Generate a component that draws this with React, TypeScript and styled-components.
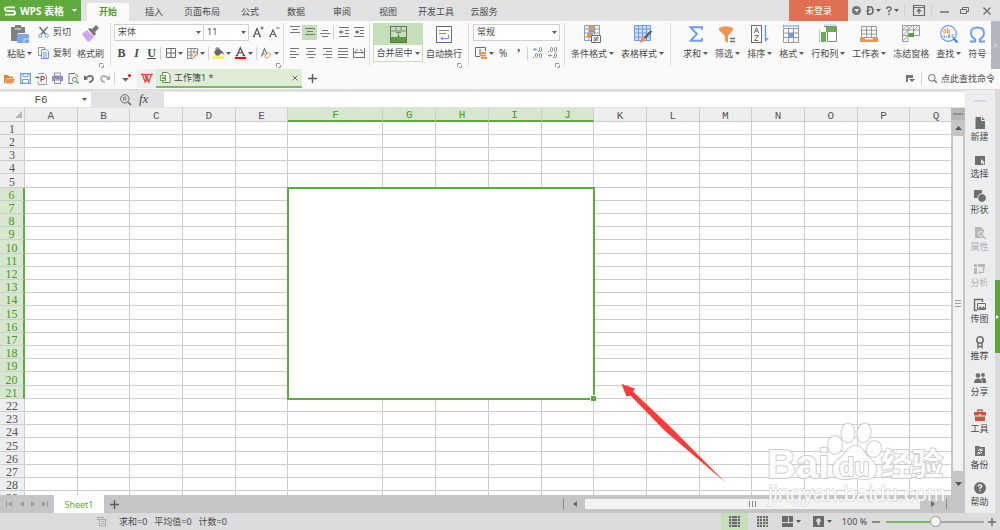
import React from "react";
import styled, { createGlobalStyle, css } from "styled-components";

const ui = '"Noto Sans", "Noto Sans CJK SC", sans-serif';
const green = "#5faa3c";
const ink = "#4a4a4a";
const line = "#cdcdcd";

const GlobalStyle = createGlobalStyle`
  * { box-sizing: border-box; }
  body { margin: 0; font: 9px/12px ${ui}; color: ${ink}; background: #fafafa; }
  button, input, select { font: inherit; color: inherit; margin: 0; padding: 0; border: 0; background: none; border-radius: 0; }
  button { cursor: pointer; white-space: nowrap; }
  svg { display: block; flex: none; overflow: visible; }
`;

const Page = styled.div`
  display: flex;
  flex-direction: column;
  height: 100vh;
  overflow: hidden;
`;

/* ---------- title bar ---------- */
const TitleBar = styled.header`
  display: flex;
  flex: none;
  height: 21px;
  background: #e1e2e4;
`;
const Brand = styled.button`
  display: flex;
  align-items: center;
  gap: 4px;
  width: 81px;
  padding: 0 4px;
  background: ${green};
  color: #fff;
  font-size: 10px;
  font-weight: 700;
  & > svg:last-child { margin-left: auto; }
`;
const MenuTabs = styled.nav`
  display: flex;
  align-items: flex-end;
  padding-left: 4px;
`;
const MenuTab = styled.button<{ $active?: boolean }>`
  min-width: 46px;
  height: 18px;
  padding: 0 7px;
  ${(p) =>
    p.$active &&
    css`
      min-width: 42px;
      margin: 0 2px;
      background: #fafafa;
      color: #4a9a22;
      font-weight: 700;
    `}
`;
const WindowTools = styled.div`
  display: flex;
  align-items: center;
  margin-left: auto;
`;
const Login = styled.button`
  width: 59px;
  height: 21px;
  background: #df7052;
  color: #fff;
`;
const WindowButton = styled.button<{ $w: number }>`
  display: flex;
  align-items: center;
  justify-content: center;
  gap: 2px;
  width: ${(p) => p.$w}px;
  height: 20px;
`;

/* ---------- ribbon ---------- */
const Ribbon = styled.div`
  display: flex;
  flex: none;
  height: 48px;
  background: #fafafa;
  overflow: hidden;
`;
const Group = styled.section<{ $left: number; $right: number }>`
  display: flex;
  flex: none;
  flex-direction: column;
  gap: 3px;
  padding: 2px ${(p) => p.$right}px 0 ${(p) => p.$left}px;
`;
const Columns = styled.div<{ $gap: number }>`
  display: flex;
  gap: ${(p) => p.$gap}px;
  height: 39px;
`;
const Stack = styled.div`
  display: flex;
  flex-direction: column;
  gap: 3px;
`;
const ToolRow = styled.div<{ $spread?: boolean }>`
  display: flex;
  align-items: center;
  height: 18px;
  justify-content: ${(p) => (p.$spread ? "space-between" : "flex-start")};
`;
const Tool = styled.button<{ $w?: number; $active?: boolean }>`
  display: flex;
  align-items: center;
  justify-content: center;
  gap: 2px;
  width: ${(p) => p.$w || 15}px;
  height: 15px;
  background: ${(p) => (p.$active ? "#c5e0b8" : "none")};
`;
const SmallTool = styled.button`
  display: flex;
  align-items: center;
  gap: 4px;
  height: 18px;
`;
const BigTool = styled.button<{ $framed?: boolean }>`
  display: grid;
  grid-template-rows: 22px 17px;
  align-items: center;
  justify-items: center;
  ${(p) =>
    p.$framed &&
    css`
      width: 50px;
      border: 1px solid #c5e0b8;
      background: linear-gradient(#c5e0b8 21px, #fff 21px);
      grid-template-rows: 21px 16px;
    `}
`;
const BigLabel = styled.span`
  display: flex;
  align-items: center;
  gap: 2px;
`;
const GroupRule = styled.i`
  flex: none;
  width: 1px;
  height: 43px;
  margin-top: 2px;
  background: #dedede;
`;
const Rule = styled.i`
  flex: none;
  width: 1px;
  height: 13px;
  margin: 0 2px 0 1px;
  background: #d2d2d2;
`;
const Launcher = styled.button`
  align-self: flex-end;
  margin-top: -2px;
  height: 5px;
  line-height: 0;
`;
const Combo = styled.span<{ $w: number }>`
  display: grid;
  align-items: center;
  width: ${(p) => p.$w}px;
  height: 17px;
  border: 1px solid #d0d0d0;
  background: #fff;
  & + & { margin-left: -1px; }
  & > * { grid-area: 1 / 1; }
  & > select { appearance: none; width: 100%; height: 15px; padding-left: 3px; outline: 0; }
  & > svg { justify-self: end; margin-right: 2px; pointer-events: none; }
`;
const Glyph = styled.span<{ $italic?: boolean; $under?: boolean }>`
  font: ${(p) => (p.$italic ? "italic " : "")}700 12px/12px "Liberation Serif", serif;
  text-decoration: ${(p) => (p.$under ? "underline" : "none")};
`;
const Percent = styled.span`
  font-size: 10px;
`;
const Scroller = styled.button`
  display: flex;
  align-items: center;
  justify-content: center;
  flex: none;
  width: 9px;
  margin-left: auto;
  background: #b4b6bf;
`;

/* ---------- document tabs ---------- */
const DocBar = styled.div`
  display: flex;
  flex: none;
  align-items: center;
  height: 21px;
  padding-bottom: 1px;
  border-bottom: 1px solid #d9d9d9;
  background: #fafafa;
`;
const QuickTools = styled.div`
  display: flex;
  align-items: center;
  width: 137px;
  padding-left: 1px;
`;
const DocHome = styled.button`
  display: grid;
  place-items: center;
  width: 19px;
  height: 19px;
  background: #f0f0f0;
`;
const DocTab = styled.div`
  display: flex;
  align-items: center;
  gap: 3px;
  width: 146px;
  height: 19px;
  padding: 0 4px;
  border-bottom: 2px solid #7dba60;
  background: #dfecd6;
  & > button:last-child { margin-left: auto; }
`;
const DocName = styled.span`
  font-size: 9px;
`;
const Commands = styled.label`
  display: flex;
  align-items: center;
  gap: 4px;
  margin-left: auto;
  padding-right: 2px;
  & > input { width: 57px; outline: 0; }
  & > input::placeholder { color: ${ink}; opacity: 1; }
`;

/* ---------- work area ---------- */
const Body = styled.div`
  display: flex;
  flex: 1;
  min-height: 0;
`;
const Work = styled.main`
  display: flex;
  flex: 1;
  flex-direction: column;
  min-width: 0;
`;
const FormulaBar = styled.div`
  display: flex;
  flex: none;
  align-items: center;
  height: 18px;
  padding: 1px 0;
  background: #e1e2e4;
`;
const NameBox = styled.div`
  display: flex;
  align-items: center;
  width: 91px;
  height: 15px;
  background: #fff;
  & > input {
    width: 82px;
    height: 15px;
    padding-top: 2px;
    text-align: center;
    font: 11px/13px "Liberation Mono", monospace;
    outline: 0;
  }
`;
const FormulaTools = styled.div`
  display: flex;
  align-items: center;
  gap: 8px;
  width: 73px;
  padding-left: 29px;
`;
const Fx = styled.button`
  font: italic 13px/14px "Liberation Serif", serif;
`;
const FormulaInput = styled.input`
  flex: 1;
  min-width: 0;
  height: 15px;
  && { background: #fff; }
  outline: 0;
`;
const SheetRow = styled.div`
  display: flex;
  flex: 1;
  min-height: 0;
`;
const Canvas = styled.div`
  position: relative;
  flex: 1;
  min-width: 0;
  overflow: hidden;
  background: #fff;
`;
const Grid = styled.table`
  width: calc(100% + 12px);
  table-layout: fixed;
  border-collapse: separate;
  border-spacing: 0;
  line-height: 12px;
  tr { height: 13px; }
  tbody tr:nth-child(5n) { height: 14px; }
  thead tr { height: 14px; }
  td, th { padding: 0; border: 0 solid ${line}; border-width: 0 1px 1px 0; font-weight: 400; }
`;
const IndexCol = styled.col`
  width: 25px;
`;
const WideCol = styled.col`
  width: 95px;
`;
const ColHead = styled.th<{ $on: boolean }>`
  background: ${(p) => (p.$on ? "#d6e6cf" : "#eeeeee")};
  color: ${(p) => (p.$on ? "#4a9a22" : "#555")};
  font: 11px/10px "Liberation Mono", monospace;
  vertical-align: bottom;
  && {
    padding-top: 2px;
    ${(p) => p.$on && `border-bottom: 2px solid ${green};`}
  }
`;
const RowHead = styled.th<{ $on: boolean }>`
  background: ${(p) => (p.$on ? "#d6e6cf" : "#eeeeee")};
  color: ${(p) => (p.$on ? "#4a9a22" : "#555")};
  font: 12px/10px "Liberation Serif", serif;
  vertical-align: bottom;
  && {
    padding-top: 2px;
    ${(p) => p.$on && `border-right: 2px solid ${green};`}
  }
`;
const Corner = styled.th`
  background: #eeeeee;
  & > svg { margin-left: auto; margin-right: 2px; }
`;
const Merged = styled.td`
  position: relative;
  background: #fff;
  outline: 2px solid ${green};
  outline-offset: -1px;
  &::after {
    content: "";
    position: absolute;
    right: -3px;
    bottom: -3px;
    width: 5px;
    height: 5px;
    border: 1px solid #fff;
    border-width: 1px 0 0 1px;
    background: ${green};
  }
`;
const Arrow = styled.svg`
  position: absolute;
  left: 620px;
  top: 274px;
`;
const Watermark = styled.svg`
  position: absolute;
  right: 52px;
  bottom: 17px;
  pointer-events: none;
  z-index: 2;
`;
const VScroll = styled.div`
  display: flex;
  flex: none;
  flex-direction: column;
  align-items: center;
  width: 14px;
  padding-bottom: 3px;
  background: #c5c5c7;
`;
const SplitHandle = styled.button`
  display: grid;
  place-items: center;
  width: 14px;
  height: 12px;
  background: #b7b7b9;
`;
const ScrollButton = styled.button`
  display: grid;
  place-items: center;
  width: 14px;
  height: 16px;
`;
const VThumb = styled.div`
  display: grid;
  place-items: center;
  flex: 1;
  width: 10px;
  margin-bottom: 5px;
  background: #f3f3f3;
`;
const SheetTabs = styled.div`
  display: flex;
  flex: none;
  align-items: center;
  height: 18px;
  background: #c5c5c7;
`;
const SheetNav = styled.div`
  display: flex;
  align-items: center;
  gap: 7px;
  width: 54px;
  padding-left: 6px;
`;
const SheetTab = styled.button`
  width: 50px;
  height: 18px;
  padding-top: 2px;
  background: #fff;
  color: ${green};
`;
const AddButton = styled.button<{ $w?: number }>`
  display: grid;
  place-items: center;
  width: ${(p) => p.$w || 21}px;
  height: 18px;
`;
const HScroll = styled.div`
  display: flex;
  align-items: center;
  width: calc(41% + 6px);
  min-width: 200px;
  margin-left: auto;
  padding-right: 18px;
`;
const HThumb = styled.div`
  display: grid;
  place-items: center;
  flex: 1;
  height: 10px;
  background: #f3f3f3;
`;
const Bar = styled.i`
  width: 1px;
  height: 10px;
  background: #8c8c8c;
`;

/* ---------- task panel ---------- */
const SidePanel = styled.aside`
  display: flex;
  flex: none;
  flex-direction: column;
  width: 30px;
  background: #ebedef;
`;
const PanelGrip = styled.i`
  flex: none;
  width: 12px;
  height: 2px;
  margin: 10px auto;
  background: #d5d7da;
`;
const PanelTool = styled.button<{ $off?: boolean }>`
  display: flex;
  flex: 1;
  flex-direction: column;
  align-items: center;
  justify-content: center;
  gap: 2px;
  max-height: 44px;
  padding-right: 1px;
  color: ${(p) => (p.$off ? "#b0b2b4" : ink)};
`;
const Edge = styled.div`
  flex: none;
  width: 5px;
  background: #dadadc;
`;
const EdgeButton = styled.button`
  display: grid;
  place-items: center;
  width: 5px;
  height: 73px;
  margin-top: 190px;
  background: #5aa832;
`;

/* ---------- status bar ---------- */
const Status = styled.footer`
  display: flex;
  flex: none;
  align-items: center;
  height: 17px;
  padding: 0 4px 0 97px;
  background: #dcdcde;
`;
const Sums = styled.div`
  display: flex;
  gap: 7px;
  margin-left: 9px;
`;
const ViewTools = styled.div`
  display: flex;
  align-items: center;
  margin-left: auto;
`;
const ViewButton = styled.button<{ $w: number; $active?: boolean }>`
  display: flex;
  align-items: center;
  justify-content: center;
  gap: 3px;
  width: ${(p) => p.$w}px;
  height: 17px;
  background: ${(p) => (p.$active ? "#c5e0b8" : "none")};
`;
const ZoomLabel = styled.label`
  width: 34px;
  padding-right: 1px;
  text-align: center;
`;
const ZoomRange = styled.input`
  appearance: none;
  width: 98px;
  height: 12px;
  && {
    margin: 0 4px 0 6px;
    background: linear-gradient(90deg, #7dba60 50%, #a8a8a8 50%) center / 100% 2px no-repeat;
  }
  &::-webkit-slider-thumb {
    appearance: none;
    width: 11px;
    height: 11px;
    border: 1px solid #999;
    border-radius: 50%;
    background: #f4f4f4;
  }
`;

/* ---------- drawings ---------- */
type Art = { w?: number; h?: number; children: React.ReactNode };
const Ico = ({ w = 11, h = 11, children }: Art) => (
  <svg width={w} height={h} viewBox={`0 0 ${w} ${h}`} fill="none" stroke="#6c6c6c" strokeWidth={1} aria-hidden="true">
    {children}
  </svg>
);
const Caret = ({ fill = "#5a5a5a" }: { fill?: string }) => (
  <svg width="5" height="3" viewBox="0 0 5 3" aria-hidden="true">
    <path d="M0 0h5L2.500 3z" fill={fill} />
  </svg>
);
const Corners = ({ label }: { label: string }) => (
  <Launcher aria-label={label}>
    <Ico w={5} h={5}>
      <path d="M.5 4V.5H4M2 4.500h2.500V2" stroke="#999" />
    </Ico>
  </Launcher>
);
const blue = "#6d9ced";
const orange = "#f0934e";

const art = {
  logo: (
    <Ico w={12} h={10}>
      <path d="M11 1.300H3.200Q1 1.300 1 3.100T3.200 5H8.800Q11 5 11 6.900T8.800 8.700H1" stroke="#fff" strokeWidth={1.800} />
    </Ico>
  ),
  paste: (
    <Ico w={18} h={18}>
      <path d="M0 2h4V0h6v2h4v6H7v8H0z" fill="#808080" stroke="none" />
      <path d="M4 4h6" stroke="#eee" />
      <path d="M6 9h11l1 1v8H6z" fill="#7ea8ee" stroke="none" />
      <path d="M13 18v-4h5" stroke="#fff" strokeWidth={0.700} />
    </Ico>
  ),
  cut: (
    <Ico>
      <path d="M1.500 0 8 7.500M9.500 0 3 7.500" stroke="#666" strokeWidth={1.300} />
      <circle cx="2.300" cy="8.700" r="1.700" stroke={blue} />
      <circle cx="8.700" cy="8.700" r="1.700" stroke={blue} />
    </Ico>
  ),
  copy: (
    <Ico w={11} h={12}>
      <path d="M3 8.500H.5v-8h6V2" stroke="#999" />
      <path d="M3.500 2.500h5l2 2v7h-7z" stroke={blue} fill="#eef4ff" />
      <path d="M5 6h4M5 8h4M5 10h4" stroke={blue} />
    </Ico>
  ),
  brush: (
    <Ico w={18} h={18}>
      <path d="m0 9 5-4 7 7-5 5-2-1z" fill="#cfa5ee" stroke="none" />
      <path d="m6 4 2-1 2 1 4-4 3 3-4 4 1 2-2 2z" fill="#777" stroke="none" />
    </Ico>
  ),
  borders: (
    <Ico w={10} h={10}>
      <path d="M.5.5h9v9h-9zM5 .5v9M.5 5h9" />
    </Ico>
  ),
  drawBorders: (
    <Ico>
      <path d="M.5.5h10v6M.5.5v10H6M4 .5v10M7 .5v5M.5 4h10M.5 7h6" stroke="#8b8b8b" />
      <path d="m5.500 10.500 1-2.500 3.500-3 1 1-3.500 3.500z" fill={orange} stroke="none" />
    </Ico>
  ),
  fill: (
    <Ico w={11} h={12}>
      <path d="M1 5 5 1l4 3q2 1 1.500 4L8.500 6 6 8.500H3z" fill="#666" stroke="none" />
      <path d="M3 3V1h3" />
      <path d="M0 9.500h11v2H0z" fill="#fff200" stroke="none" />
    </Ico>
  ),
  fontColor: (
    <Ico w={11} h={12}>
      <path d="M2 8.500 5.300.8 9 8.500M3.200 5.700h4.400M.7 8.500h2.500M7.500 8.500h2.700" strokeWidth={1.300} stroke="#555" />
      <path d="M0 10h11v2H0z" fill="#f00" stroke="none" />
    </Ico>
  ),
  clear: (
    <Ico>
      <path d="M.5 8.500 3.500.8 6 6M1.500 6H4" stroke="#777" strokeWidth={1.200} />
      <path d="m4 8 3.500-3.500 2.500 2-3.500 3.500H5z" fill="#fff" stroke={orange} />
    </Ico>
  ),
  bigger: (
    <Ico w={11} h={12}>
      <path d="M.7 10.500 4 2.500l3.300 8M2 8h4M0 10.500h2M6 10.500h2" strokeWidth={1.200} stroke="#555" />
      <path d="M7.500 2h3M9 .5v3" stroke="#555" />
    </Ico>
  ),
  smaller: (
    <Ico w={11} h={12}>
      <path d="M1 10.500 4 4l3 6.500M2 8.500h4M0 10.500h2M6 10.500h2" strokeWidth={1.200} stroke="#666" />
      <path d="M7.500 2h3" stroke="#555" />
    </Ico>
  ),
  wrap: (
    <Ico w={16} h={17}>
      <rect x=".5" y=".5" width="15" height="16" fill="#fff" />
      <path d="M3 4.500h10M3 7.500h7" stroke="#888" />
      <path d="M12.500 8.500v4H6" stroke={blue} strokeWidth={1.200} />
      <path d="m4 12.500 3-2v4z" fill={blue} stroke="none" />
    </Ico>
  ),
  merge: (
    <Ico w={17} h={17}>
      <rect x=".5" y=".5" width="16" height="16" fill="#c5e0b8" />
      <path d="M.5 5H16.500M6 .5V5M11 .5V5M6 6.500h5M8.500 6.500v4M7 10.500h3" stroke="#7d8a77" />
      <path d="M1 11h15v5H1z" fill="#5d9b40" stroke="none" />
    </Ico>
  ),
  currency: (
    <Ico w={12} h={12}>
      <path d="M5 9.500H.5v-9h10V4M5 3v5M4 3h2" />
      <path d="M6 5h5v2H6zM5 7.500h6v2H5zM6 10h6v2H6z" fill={orange} stroke="none" />
    </Ico>
  ),
  conditional: (
    <Ico w={17} h={18}>
      <path d="M.5.5h15v15H.5zM5 .5v15M10.500.5v15M.5 4h15M.5 8h15M.5 12h15" stroke="#999" />
      <path d="M5 1h5v3H5zM3 8h6v4H3z" fill={orange} stroke="none" />
      <path d="M5 4.500h6v3H5z" fill={blue} stroke="none" />
      <path d="M7.500 10.500h9v7h-9z" fill="#f7f7f7" />
      <path d="M9.500 13h5M9.500 15h5M13.500 11.500l-3 5" />
    </Ico>
  ),
  tableStyle: (
    <Ico w={18} h={18}>
      <path d="M.5.5h16v15H.5z" fill="#cfe0fb" stroke={blue} />
      <path d="M1 4h15.500M1 8h15.500M1 12h15.500M4.500.5v15M8.500.5v15M12.500.5v15" stroke={blue} />
      <path d="m17.500 6-7 7" stroke="#555" strokeWidth={2.200} />
      <path d="m9 11.500 2.500 2.500c-1 3-4 4-6.500 3.500 2-1 1.500-5 4-6z" fill={orange} stroke="none" />
    </Ico>
  ),
  sum: (
    <Ico w={14} h={16}>
      <path d="M13 4V1.200H1.500L8 8l-6.500 6.800H13V12" stroke={blue} strokeWidth={1.900} />
    </Ico>
  ),
  filter: (
    <Ico w={17} h={17}>
      <path d="M0 2q7-3.500 14 0v2L9 10v7l-3-2v-5L0 4z" fill={orange} stroke="none" />
      <path d="M11 12.500h5M11 15.500h5" strokeWidth={1.500} />
    </Ico>
  ),
  sort: (
    <Ico w={18} h={18}>
      <rect x=".5" y=".5" width="10" height="17" fill="#fff" />
      <path d="M3.300 8 5.500 2.500 7.700 8M4 6h3M3.500 10.500h4l-4 5h4" />
      <path d="M14.500 0v16" stroke={blue} strokeWidth={1.500} />
      <path d="M14 17v-4h4z" fill={blue} stroke="none" />
    </Ico>
  ),
  format: (
    <Ico w={17} h={18}>
      <path d="M.5 3.500h15v14H.5zM5.500 3.500v14M10.500 3.500v14M.5 8h15M.5 12.500h15" stroke="#999" />
      <path d="M5.500 8h5.500v5H5.500z" fill={blue} stroke="none" />
      <path d="M0 1h16M.5 0v2.500M15.500 0v2.500" stroke={blue} />
    </Ico>
  ),
  rowsCols: (
    <Ico w={18} h={18}>
      <path d="M5 1.500h12.500v15H8.500V7" stroke="#888" fill="#fff" />
      <path d="M7 2h10.500v5H7zM2 7h5v10H2z" fill="#6cab4b" stroke="none" />
      <path d="M5 0h12M.5 5v12" stroke="#a7c7f3" />
    </Ico>
  ),
  worksheet: (
    <Ico w={18} h={18}>
      <path d="M1.500 1.500h15v11h-15zM6.500 1.500v11M11.500 1.500v11M1.500 5.200h15M1.500 9h15" stroke="#999" />
      <path d="M0 12.500h5v2h8v-2h5V17H0z" fill={orange} stroke="none" />
    </Ico>
  ),
  freeze: (
    <Ico w={18} h={18}>
      <path d="M6 10.500V16.500H.5V.5h17v10H6V.5M11.500.5v10M.5 5h17M.5 10.500H6M.5 5 5 .5M6 5 10.500.5M12 5 16.500.5M.5 11 6 5M.5 16l5.500-5.500" stroke="#999" />
      <path d="M6.500 8H12v4H6.500z" fill="#5d9b40" stroke="none" />
    </Ico>
  ),
  find: (
    <Ico w={18} h={18}>
      <circle cx="8.500" cy="8.500" r="7.800" stroke={blue} strokeWidth={1.200} fill="#fff" />
      <path d="m13.500 13.500 4 4" stroke="#3c83e0" strokeWidth={2.200} />
      <path d="M3.500 6.500q0-2 2-2v3.500h-1.500zM7.500 3v5h2V5.500h-2" stroke={orange} />
      <path d="M4 9.500V12h3M9.500 9v3.500h-1v-2h1M14 10h-2v2.500h2" stroke={blue} />
    </Ico>
  ),
  omega: (
    <Ico w={17} h={17}>
      <path d="M1 15.500h5.200v-2.200Q2 11 2 7q0-5.500 6.500-5.500T15 7q0 4-4.200 6.300v2.200H16" stroke={blue} strokeWidth={1.900} />
    </Ico>
  ),
  folder: (
    <Ico w={11} h={10}>
      <path d="M0 1h4l1 1.500h4V4H3L.8 9H0z" fill="#d9853a" stroke="none" />
      <path d="M3 4.500h8L9 9.500H1z" fill={orange} stroke="none" />
    </Ico>
  ),
  save: (
    <Ico>
      <path d="M.7.7h9.600v9.600H.7z" stroke={blue} strokeWidth={1.300} fill="#fff" />
      <path d="M3 .7v3h5v-3M2.500 10V6.500h6V10" stroke={blue} />
    </Ico>
  ),
  pdf: (
    <Ico w={12} h={12}>
      <path d="M3 .5h6l2.500 2.500v8.500H3V8" stroke="#999" />
      <path d="M6 9V3.500h2q1.500 0 1.500 1.500T8 6.500H6" stroke="#d23" />
      <path d="M0 4.500h4M2.500 3 4 4.500 2.500 6" stroke="#3a9150" />
    </Ico>
  ),
  print: (
    <Ico>
      <path d="M2.500 0h6v3h-6z" fill="#fff" stroke="#9089bd" />
      <path d="M0 3h11v5H9V6.500H2V8H0z" fill="#8f8aba" stroke="none" />
      <path d="M2.500 7h6v3.500h-6z" fill="#fff" stroke="#9089bd" />
    </Ico>
  ),
  preview: (
    <Ico>
      <path d="M9.500 4V3L7 .5H1v10h4" stroke="#777" />
      <circle cx="6.700" cy="6.700" r="2.300" stroke="#4e9a5e" />
      <path d="m8.500 8.500 2 2" strokeWidth={1.500} stroke="#4e9a5e" />
    </Ico>
  ),
  undo: (
    <Ico w={10} h={9}>
      <path d="M2 3.500q6-3.500 7 .5.300 3-4 4.500" strokeWidth={1.600} stroke="#666" />
      <path d="M0 1v5l4-.5z" fill="#666" stroke="none" />
    </Ico>
  ),
  redo: (
    <Ico w={10} h={9}>
      <path d="M8 3.500q-6-3.500-7 .5-.3 3 4 4.500" strokeWidth={1.600} stroke="#aaa" />
      <path d="M10 1v5l-4-.5z" fill="#aaa" stroke="none" />
    </Ico>
  ),
  more: (
    <Ico w={9} h={10}>
      <path d="M0 4h7L3.500 7.500z" fill="#666" stroke="none" />
      <circle cx="7.500" cy="1.500" r="1.500" fill="#f00" stroke="none" />
    </Ico>
  ),
  wps: (
    <Ico w={12} h={9}>
      <path d="M0 .5h6M6 .5h6M1.500.5 4 8l2-6 2 6L10.500.5M4 .5 6.500 8" stroke="#ee4848" strokeWidth={1.300} />
    </Ico>
  ),
  doc: (
    <Ico>
      <path d="M2.500.5h5L10 3v7.500H2.500z" fill="#fff" stroke="#777" />
      <path d="M0 3h6v6H0z" fill="#6bb04a" stroke="none" />
      <path d="M4.500 4.500h-3v3h3" stroke="#fff" />
    </Ico>
  ),
  close: (
    <Ico w={6} h={6}>
      <path d="m.5.5 5 5M5.500.5l-5 5" />
    </Ico>
  ),
  plus: (
    <Ico w={9} h={9}>
      <path d="M0 4.500h9M4.500 0v9" stroke="#5b5b5b" strokeWidth={1.400} />
    </Ico>
  ),
  pin: (
    <Ico w={10} h={9}>
      <path d="M0 1h7v3H2v4H0z" fill="#777" stroke="none" />
      <path d="M3 5h6L6 8z" fill="#666" stroke="none" />
    </Ico>
  ),
  search: (
    <Ico w={9} h={9}>
      <circle cx="3.800" cy="3.800" r="3.300" />
      <path d="m6.300 6.300 2.500 2.500" strokeWidth={1.300} />
    </Ico>
  ),
  lens: (
    <Ico>
      <circle cx="4.800" cy="4.800" r="4.200" />
      <path d="m8 8 3 3" strokeWidth={1.700} />
      <path d="M3.500 7V3H6v2H3.500M5 5l1.500 2" stroke="#888" />
    </Ico>
  ),
  skin: (
    <Ico w={9} h={9}>
      <circle cx="4.500" cy="4.500" r="4.500" fill="#737373" stroke="none" />
      <path d="M2 3h5L5 6.500z" fill="#e1e2e4" stroke="none" />
    </Ico>
  ),
  docer: (
    <Ico w={8} h={9}>
      <path d="M1.800 8.200V.8H4q3 .3 3 3.700T4 8.200z" stroke="#666" strokeWidth={1.500} />
      <path d="M0 5h2.500L5 3" stroke="#666" />
    </Ico>
  ),
  help: (
    <Ico w={6} h={9}>
      <path d="M.8 3q0-2 2.200-2t2.200 1.800Q5.200 4 3 5v1.500M3 7.600V9" strokeWidth={1.500} />
    </Ico>
  ),
  fold: (
    <Ico w={12} h={11}>
      <path d="M.5.5h11v10H.5zM.5 2.500h11M6 9V5" strokeWidth={1.200} />
      <path d="M3 6.500 6 3.500l3 3z" fill="#666" stroke="none" />
    </Ico>
  ),
  minimise: (
    <Ico w={9} h={9}>
      <path d="M0 6h9" strokeWidth={1.500} />
    </Ico>
  ),
  restore: (
    <Ico w={9} h={7}>
      <path d="M.5 2.500h6v4h-6zM2.500 2.500v-2h6v4h-2" />
    </Ico>
  ),
  quit: (
    <Ico w={8} h={8}>
      <path d="m.5.5 7 7M7.500.5l-7 7" strokeWidth={1.400} />
    </Ico>
  ),
  statusGrid: (
    <Ico w={9} h={9}>
      <path d="M.5 0v2.500M0 2.500h8.500v6.500H2.500V2M4.500 4.500h3M4.500 6.500h3M0 .5h7" stroke="#aaa" />
    </Ico>
  ),
};

const alignLines = (rows: number[][], y: number, w = 10) => (
  <Ico w={w} h={12}>
    {rows.map(([a, b], i) => (
      <path key={i} d={`M${a} ${y + i * 3 + 0.5}H${b}`} stroke="#777" />
    ))}
  </Ico>
);
const Indent = ({ flip }: { flip?: boolean }) => (
  <Ico w={10} h={10}>
    <path d="M0 .5h10M6 3.500h4M6 6.500h4M0 9.500h10M1 5h4" stroke="#777" />
    <path d={flip ? "M5 5 2.500 3v4z" : "M0 5l2.500-2v4z"} fill="#555" stroke="none" />
  </Ico>
);
const Spread = () => (
  <Ico w={12} h={10}>
    <path d="M.5 0v9M11.500 0v9M0 9.500h12M2 4.500h8M4 1v2M8 1v2" stroke="#777" />
    <path d="m1 4.500 2-1.500v3zM11 4.500 9 3v3z" fill="#666" stroke="none" />
  </Ico>
);
const Decimals = ({ less }: { less?: boolean }) => (
  <Ico w={10} h={12}>
    <path
      d={less ? "M0 8.500h4M2 7v3" : "M0 2.500h4M2 1v3"}
      stroke={blue}
    />
    {(less ? [[2.5, 0.5], [6.500, 0.5], [6.500, 6.500]] : [[6.500, 0.5], [2.5, 6.500], [6.500, 6.500]]).map(([x, y]) => (
      <rect key={`${x}-${y}`} x={x} y={y} width="2" height="4" rx="1" stroke="#888" />
    ))}
    <path d={less ? "M0 4.500h1M5 10.500h1" : "M5 4.500h1M0 10.500h1"} />
  </Ico>
);
const Play = ({ left, stop, dim }: { left?: boolean; stop?: boolean; dim?: boolean }) => (
  <Ico w={stop ? 7 : 4} h={8}>
    <path
      d={left ? (stop ? "M6 1v6L2 4z" : "M4 1v6L0 4z") : "M0 1v6l4-3z"}
      fill={dim ? "#9b9b9d" : "#666"}
      stroke="none"
    />
    {stop && <path d={left ? "M.5 1v6" : "M5.500 1v6"} stroke="#9b9b9d" />}
  </Ico>
);
const GridView = ({ cut }: { cut?: boolean }) => (
  <Ico w={11} h={11}>
    <path d="M0 0h11v11H0z" fill="#6a6a6a" stroke="none" />
    <path d="M2.500 0v11M8.500 0v11M0 2.500h11M0 5.500h11M0 8.500h11" stroke="#d4e2cc" strokeWidth={0.700} />
    {cut && <path d="M5.500 0v11M11 8 8 11" stroke="#dcdcde" />}
  </Ico>
);

const panelArt: Record<string, React.ReactNode> = {
  新建: <path d="M1.500 0H7v4h4v8H1.500zM8 0l3 3H8z" fill="#6e6e70" stroke="none" />,
  选择: (
    <>
      <path d="M1 2h10v9H1z" fill="#6e6e70" stroke="none" />
      <path d="M7 5v5l1.500-1 1 2 1-.5-1-2H11z" fill="#ebedef" stroke="none" />
    </>
  ),
  形状: (
    <>
      <path d="M0 0h8v4L4 8H0z" fill="#6e6e70" stroke="none" />
      <circle cx="8" cy="8" r="4.300" fill="#6e6e70" stroke="#ebedef" />
    </>
  ),
  属性: (
    <>
      <path d="M1 0h6l3 3v8H1z" fill="#b6b8ba" stroke="none" />
      <circle cx="7" cy="7" r="2.500" stroke="#ebedef" />
      <path d="m9 9 3 3" stroke="#b6b8ba" strokeWidth={1.500} />
    </>
  ),
  分析: (
    <>
      <path d="M0 1h3v3H0zM4 1h7v3H4zM0 5h3v6H0z" fill="#b6b8ba" stroke="none" />
      <path d="M5 9.500h4.500V5M7 7.500l-2 2 2 2M8 6.500l1.500-2 2 2" stroke="#b6b8ba" />
    </>
  ),
  传图: (
    <>
      <path d="M3 11.500H.5V.5h8V3" strokeWidth={1.400} />
      <path d="M3.500 4.500h8v6h-8z" />
      <path d="m4 10 2-3 2 2 1.500-2 2 3z" fill="#777" stroke="none" />
    </>
  ),
  推荐: (
    <>
      <circle cx="6" cy="4" r="3.200" strokeWidth={1.600} />
      <path d="M4 7v4.500l2-1.500 2 1.500V7" strokeWidth={1.400} />
    </>
  ),
  分享: (
    <>
      <circle cx="4" cy="3.500" r="2.300" fill="#6e6e70" stroke="none" />
      <circle cx="9" cy="3" r="1.900" fill="#6e6e70" stroke="none" />
      <path d="M0 11q0-4.500 4-4.500T8 11zM8.500 11q0-3-1.500-4.500 4.500-2 5 2V11z" fill="#6e6e70" stroke="none" />
    </>
  ),
  工具: (
    <>
      <path d="M4 3V1h4v2" stroke="#cf5338" strokeWidth={1.400} />
      <path d="M0 3h12v3.500H0zM1 7.500h10V12H1z" fill="#cf5338" stroke="none" />
      <path d="M4.500 6h3" stroke="#fff" />
    </>
  ),
  备份: (
    <>
      <path d="M1 1h4l1 1h5v9H1z" fill="#737375" stroke="none" />
      <path d="M4 6q2-3.500 4-.5M8 7q-2 3-4 .5M8 3.500v2H6M4 9.500v-2h2" stroke="#ebedef" />
    </>
  ),
  帮助: (
    <>
      <circle cx="6" cy="6" r="6" fill="#6e6e70" stroke="none" />
      <path d="M4.200 4.500q0-1.700 1.800-1.700t1.800 1.500Q7.800 5.300 6 6v1.200M6 8.300v1.200" stroke="#fff" strokeWidth={1.200} />
    </>
  ),
};

/* ---------- data ---------- */
const menus = ["开始", "插入", "页面布局", "公式", "数据", "审阅", "视图", "开发工具", "云服务"];
const letters = "ABCDEFGHIJKLMNOPQ".split("");
const rowCount = 29;
const selCols = [5, 9];
const selRows = [6, 21];
const commands: [string, React.ReactNode, boolean][] = [
  ["求和", art.sum, true],
  ["筛选", art.filter, true],
  ["排序", art.sort, true],
  ["格式", art.format, true],
  ["行和列", art.rowsCols, true],
  ["工作表", art.worksheet, true],
  ["冻结窗格", art.freeze, false],
  ["查找", art.find, true],
  ["符号", art.omega, false],
];
const quick: [string, React.ReactNode][] = [
  ["打开", art.folder],
  ["保存", art.save],
  ["输出为PDF", art.pdf],
  ["打印", art.print],
  ["打印预览", art.preview],
  ["撤销", art.undo],
  ["恢复", art.redo],
];

const Big = ({ label, icon, caret, framed }: { label: string; icon: React.ReactNode; caret?: boolean; framed?: boolean }) => (
  <BigTool $framed={framed}>
    {icon}
    <BigLabel>
      {label}
      {caret && <Caret />}
    </BigLabel>
  </BigTool>
);

const inside = (v: number, [a, b]: number[]) => v >= a && v <= b;

const Sheet = () => (
  <Grid>
    <colgroup>
      <IndexCol />
      {letters.map((l) => (l === "F" ? <WideCol key={l} /> : <col key={l} />))}
    </colgroup>
    <thead>
      <tr>
        <Corner aria-label="全选">
          <Ico w={7} h={7}>
            <path d="M7 0v7H0z" fill="#b5b5b5" stroke="none" />
          </Ico>
        </Corner>
        {letters.map((l, i) => (
          <ColHead key={l} scope="col" $on={inside(i, selCols)}>
            {l}
          </ColHead>
        ))}
      </tr>
    </thead>
    <tbody>
      {Array.from({ length: rowCount }, (_, r) => r + 1).map((r) => (
        <tr key={r}>
          <RowHead scope="row" $on={inside(r, selRows)}>
            {r}
          </RowHead>
          {letters.map((l, i) => {
            if (inside(r, selRows) && inside(i, selCols)) {
              return r === selRows[0] && i === selCols[0] ? <Merged key={l} colSpan={5} rowSpan={16} /> : null;
            }
            return <td key={l} />;
          })}
        </tr>
      ))}
    </tbody>
  </Grid>
);

export default function App() {
  return (
    <Page>
      <GlobalStyle />
      <TitleBar>
        <Brand>
          {art.logo}
          WPS 表格
          <Caret fill="#fff" />
        </Brand>
        <MenuTabs>
          {menus.map((m, i) => (
            <MenuTab key={m} $active={i === 0}>
              {m}
            </MenuTab>
          ))}
        </MenuTabs>
        <WindowTools>
          <Login>未登录</Login>
          <WindowButton $w={17} aria-label="皮肤">{art.skin}</WindowButton>
          <WindowButton $w={17} aria-label="稻壳">{art.docer}<Caret /></WindowButton>
          <WindowButton $w={21} aria-label="帮助菜单">{art.help}<Caret /></WindowButton>
          <Rule />
          <WindowButton $w={23} aria-label="折叠功能区">{art.fold}</WindowButton>
          <Rule />
          <WindowButton $w={20} aria-label="最小化">{art.minimise}</WindowButton>
          <WindowButton $w={20} aria-label="还原">{art.restore}</WindowButton>
          <WindowButton $w={26} aria-label="关闭">{art.quit}</WindowButton>
        </WindowTools>
      </TitleBar>

      <Ribbon>
        <Group $left={7} $right={6}>
          <Columns $gap={6}>
            <Big label="粘贴" icon={art.paste} caret />
            <Stack>
              <SmallTool>{art.cut}剪切</SmallTool>
              <SmallTool>{art.copy}复制</SmallTool>
            </Stack>
            <Big label="格式刷" icon={art.brush} />
          </Columns>
          <Corners label="剪贴板选项" />
        </Group>
        <GroupRule />
        <Group $left={3} $right={2}>
          <ToolRow>
            <Combo $w={90}>
              <select aria-label="字体"><option>宋体</option></select>
              <Caret />
            </Combo>
            <Combo $w={46}>
              <select aria-label="字号"><option>11</option></select>
              <Caret />
            </Combo>
            <Tool $w={18} aria-label="增大字号">{art.bigger}</Tool>
            <Tool $w={14} aria-label="减小字号">{art.smaller}</Tool>
          </ToolRow>
          <ToolRow>
            <Tool aria-label="加粗"><Glyph>B</Glyph></Tool>
            <Tool aria-label="倾斜"><Glyph $italic>I</Glyph></Tool>
            <Tool aria-label="下划线"><Glyph $under>U</Glyph></Tool>
            <Rule />
            <Tool $w={22} aria-label="边框">{art.borders}<Caret /></Tool>
            <Tool $w={22} aria-label="绘制边框">{art.drawBorders}<Caret /></Tool>
            <Rule />
            <Tool $w={22} aria-label="填充颜色">{art.fill}<Caret /></Tool>
            <Tool $w={22} aria-label="字体颜色">{art.fontColor}<Caret /></Tool>
            <Rule />
            <Tool $w={22} aria-label="清除">{art.clear}<Caret /></Tool>
          </ToolRow>
          <Corners label="字体选项" />
        </Group>
        <GroupRule />
        <Group $left={3} $right={3}>
          <ToolRow>
            <Tool aria-label="顶端对齐">{alignLines([[0, 10], [2, 8], [0, 10]], 0)}</Tool>
            <Tool $active aria-label="垂直居中">{alignLines([[0, 10], [2, 8], [0, 10]], 2)}</Tool>
            <Tool aria-label="底端对齐">{alignLines([[2, 8], [0, 10], [2, 8]], 4)}</Tool>
            <Rule />
            <Tool aria-label="减少缩进"><Indent /></Tool>
            <Tool aria-label="增加缩进"><Indent flip /></Tool>
          </ToolRow>
          <ToolRow $spread>
            <Tool aria-label="左对齐">{alignLines([[0, 9], [0, 6], [0, 9], [0, 6]], 1)}</Tool>
            <Tool aria-label="居中">{alignLines([[0, 10], [2, 8], [0, 10], [2, 8]], 1)}</Tool>
            <Tool aria-label="右对齐">{alignLines([[1, 10], [4, 10], [1, 10], [4, 10]], 1)}</Tool>
            <Tool aria-label="两端对齐">{alignLines([[0, 10], [0, 10], [0, 10], [0, 10]], 1)}</Tool>
            <Tool aria-label="分散对齐"><Spread /></Tool>
          </ToolRow>
        </Group>
        <GroupRule />
        <Group $left={3} $right={6}>
          <Columns $gap={3}>
            <Big label="合并居中" icon={art.merge} caret framed />
            <Big label="自动换行" icon={art.wrap} />
          </Columns>
          <Corners label="对齐选项" />
        </Group>
        <GroupRule />
        <Group $left={4} $right={4}>
          <ToolRow>
            <Combo $w={87}>
              <select aria-label="数字格式"><option>常规</option></select>
              <Caret />
            </Combo>
          </ToolRow>
          <ToolRow>
            <Tool $w={22} aria-label="货币">{art.currency}<Caret /></Tool>
            <Tool $w={16} aria-label="百分比"><Percent>%</Percent></Tool>
            <Tool aria-label="千位分隔"><Glyph>’</Glyph></Tool>
            <Rule />
            <Tool aria-label="增加小数位"><Decimals /></Tool>
            <Tool aria-label="减少小数位"><Decimals less /></Tool>
          </ToolRow>
          <Corners label="数字选项" />
        </Group>
        <GroupRule />
        <Group $left={6} $right={6}>
          <Columns $gap={7}>
            <Big label="条件格式" icon={art.conditional} caret />
            <Big label="表格样式" icon={art.tableStyle} caret />
          </Columns>
        </Group>
        <GroupRule />
        <Group $left={12} $right={0}>
          <Columns $gap={7}>
            {commands.map(([label, icon, caret]) => (
              <Big key={label} label={label} icon={icon} caret={caret} />
            ))}
          </Columns>
        </Group>
        <Scroller aria-label="更多命令">
          <Ico w={3} h={5}>
            <path d="m.5.5 2 2-2 2" stroke="#eee" />
          </Ico>
        </Scroller>
      </Ribbon>

      <DocBar>
        <QuickTools>
          {quick.map(([label, icon]) => (
            <Tool key={label} $w={16} aria-label={label}>
              {icon}
            </Tool>
          ))}
          <Rule />
          <Tool $w={18} aria-label="自定义快速访问">{art.more}</Tool>
        </QuickTools>
        <DocHome aria-label="首页">{art.wps}</DocHome>
        <DocTab>
          {art.doc}
          <DocName>工作簿1 *</DocName>
          <button aria-label="关闭工作簿">{art.close}</button>
        </DocTab>
        <Tool $w={20} aria-label="新建工作簿">{art.plus}</Tool>
        <Commands>
          {art.pin}
          <Rule />
          {art.search}
          <input placeholder="点此查找命令" aria-label="点此查找命令" />
        </Commands>
      </DocBar>

      <Body>
        <Work>
          <FormulaBar>
            <NameBox>
              <input defaultValue="F6" aria-label="名称框" />
              <button aria-label="名称列表"><Caret /></button>
            </NameBox>
            <FormulaTools>
              <button aria-label="浏览公式">{art.lens}</button>
              <Fx>fx</Fx>
            </FormulaTools>
            <FormulaInput aria-label="编辑栏" />
          </FormulaBar>
          <SheetRow>
            <Canvas>
              <Sheet />
              <Arrow width="108" height="104" viewBox="0 0 108 104" aria-hidden="true">
                <path d="M1.500 2 15 6.500 13 9.500 50 44.500 105.500 100.500 45 49 10.500 13.500 6.500 14.500z" fill="#fb3b38" />
              </Arrow>
            </Canvas>
            <VScroll>
              <SplitHandle aria-label="拆分">
                <Ico w={10} h={2}><path d="M0 1h10" /></Ico>
              </SplitHandle>
              <ScrollButton aria-label="向上滚动">
                <Ico w={7} h={4}><path d="M0 4h7L3.500 0z" fill="#555" stroke="none" /></Ico>
              </ScrollButton>
              <VThumb>
                <Ico w={6} h={7}><path d="M0 .5h6M0 3.500h6M0 6.500h6" stroke="#999" /></Ico>
              </VThumb>
              <ScrollButton aria-label="向下滚动">
                <Ico w={7} h={4}><path d="M0 0h7L3.500 4z" fill="#555" stroke="none" /></Ico>
              </ScrollButton>
            </VScroll>
          </SheetRow>
          <SheetTabs>
            <SheetNav>
              <Play left stop dim />
              <Play left dim />
              <Play dim />
              <Play stop dim />
            </SheetNav>
            <SheetTab>Sheet1</SheetTab>
            <AddButton aria-label="新建工作表">{art.plus}</AddButton>
            <HScroll>
              <Bar />
              <AddButton aria-label="向左滚动"><Play left /></AddButton>
              <HThumb>
                <Ico w={7} h={6}><path d="M.5 0v6M3.500 0v6M6.500 0v6" stroke="#888" /></Ico>
              </HThumb>
              <AddButton $w={26} aria-label="向右滚动"><Play /></AddButton>
              <Bar />
            </HScroll>
          </SheetTabs>
        </Work>
        <SidePanel>
          <PanelGrip />
          {Object.keys(panelArt).map((label) => (
            <PanelTool key={label} $off={label === "属性" || label === "分析"}>
              <Ico w={12} h={12}>{panelArt[label]}</Ico>
              {label}
            </PanelTool>
          ))}
        </SidePanel>
        <Edge>
          <EdgeButton aria-label="展开面板">
            <Ico w={3} h={4}><path d="M0 0v4l3-2z" fill="#fff" stroke="none" /></Ico>
          </EdgeButton>
        </Edge>
      </Body>

      <Status>
        {art.statusGrid}
        <Rule />
        <Sums>
          <span>求和=0</span>
          <span>平均值=0</span>
          <span>计数=0</span>
        </Sums>
        <ViewTools>
          <ViewButton $w={27} $active aria-label="普通视图"><GridView /></ViewButton>
          <ViewButton $w={28} aria-label="分页预览"><GridView cut /></ViewButton>
          <ViewButton $w={31} aria-label="阅读模式">
            <Ico><path d="M0 0h11v11H0z" fill="#6a6a6a" stroke="none" /><path d="M0 6.500h11M6.500 1v7" stroke="#dcdcde" /></Ico>
            <Caret />
          </ViewButton>
          <ViewButton $w={31} aria-label="护眼模式">
            <Ico><path d="M0 0h11v11H0z" fill="#6a6a6a" stroke="none" /><circle cx="5.500" cy="4.500" r="2.300" fill="#dcdcde" stroke="none" /><path d="M5.500 6v3" stroke="#dcdcde" strokeWidth={2} /></Ico>
            <Caret />
          </ViewButton>
          <ZoomLabel htmlFor="zoom">100 %</ZoomLabel>
          <button aria-label="缩小"><Ico w={8} h={8}><path d="M0 4h8" strokeWidth={1.500} /></Ico></button>
          <ZoomRange id="zoom" type="range" defaultValue={50} />
          <button aria-label="放大"><Ico w={8} h={8}><path d="M0 4h8M4 0v8" strokeWidth={1.500} /></Ico></button>
        </ViewTools>
      </Status>

      <Watermark width="182" height="92" viewBox="766 421 182 92" fill="#fff" stroke="#c6c6c6" strokeWidth="2" strokeLinejoin="round" opacity="0.850" aria-hidden="true">
        <g fontFamily='"Liberation Sans", "Noto Sans CJK SC", sans-serif' fontWeight="700" paintOrder="stroke">
          <text x="767" y="478" fontSize="40">Bai</text>
          <ellipse cx="835" cy="445" rx="7" ry="9" />
          <ellipse cx="848" cy="433" rx="6.500" ry="9.500" />
          <ellipse cx="864" cy="433" rx="6.500" ry="9.500" transform="rotate(12 864 433)" />
          <ellipse cx="874" cy="449" rx="7" ry="8" transform="rotate(25 874 449)" />
          <path d="M855 446c8 0 9 8 15 13 9 6 9 20-4 20-6 0-8-1-11-1s-6 1-11 1c-13 0-14-13-6-19 8-5 9-14 17-14z" />
          <text x="839" y="476" fontSize="25">du</text>
          <text x="881" y="475" fontSize="31">经验</text>
        </g>
        <text x="768" y="501" fontSize="22" fontFamily='"Liberation Sans", sans-serif' strokeWidth="1" paintOrder="stroke">
          jingyan.baidu.com
        </text>
      </Watermark>
    </Page>
  );
}
